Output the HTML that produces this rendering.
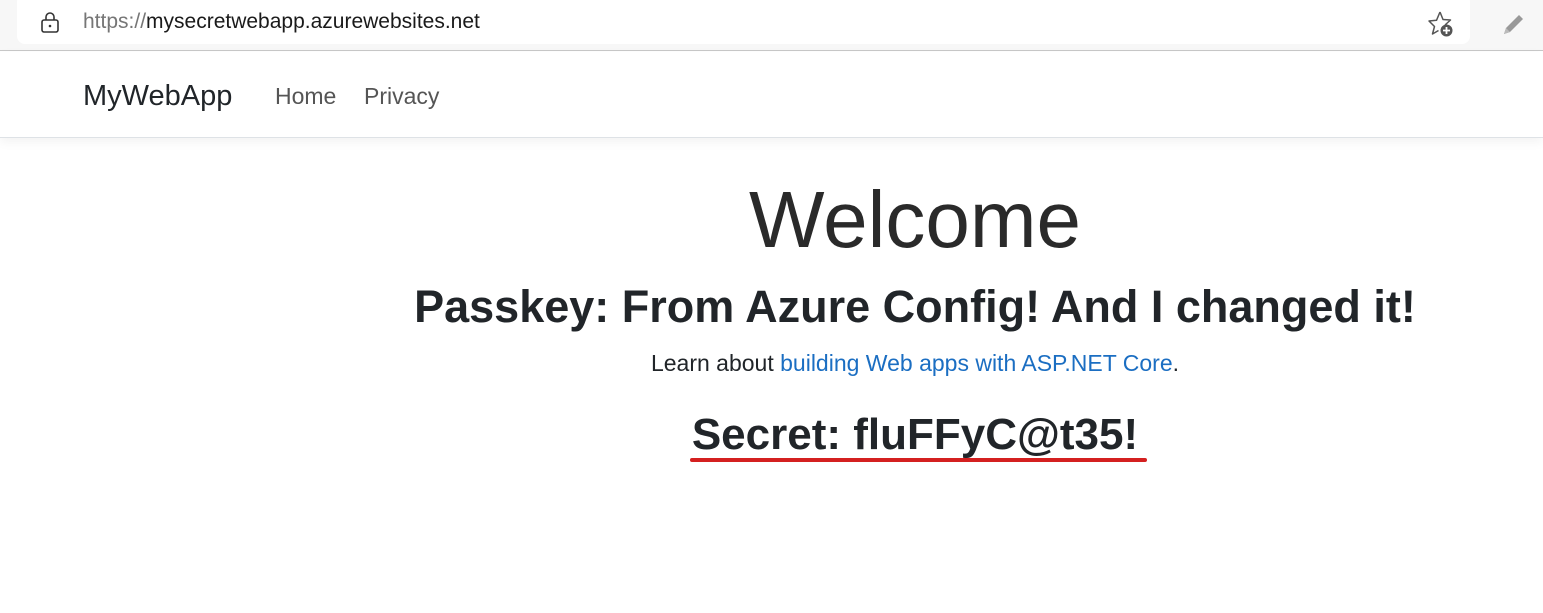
<!DOCTYPE html>
<html><head><meta charset="utf-8"><style>
*{margin:0;padding:0;box-sizing:border-box}
body{width:1543px;height:613px;background:#fff;font-family:"Liberation Sans",sans-serif;position:relative;overflow:hidden;color:#212529}
.top{position:absolute;left:0;top:0;width:1543px;height:51px;background:#f7f7f7;border-bottom:1px solid #c8c8c8}
.addr{position:absolute;left:17px;top:-6px;width:1453px;height:50px;background:#fff;border-radius:8px}
.url{position:absolute;left:83px;top:10px;font-size:21px;color:#1a1a1a}
.url span{color:#767676}
.nav{position:absolute;left:0;top:52px;width:1543px;height:86px;border-bottom:1px solid #dee2e6;box-shadow:0 4px 10px rgba(0,0,0,.05)}
.brand{position:absolute;left:83px;top:28px;font-size:29px;color:#212529}
.link{position:absolute;top:31px;font-size:23px;color:#555}
.c{position:absolute;left:0;width:1830px;text-align:center;white-space:nowrap}
</style></head><body>
<div class="top"><div class="addr"></div>
<svg style="position:absolute;left:39px;top:11px" width="22" height="24" viewBox="0 0 22 24"><rect x="3" y="9" width="16" height="12" rx="2" fill="none" stroke="#333" stroke-width="1.6"/><path d="M7 9V6a4 4 0 0 1 8 0v3" fill="none" stroke="#333" stroke-width="1.6"/><circle cx="11" cy="15" r="1.3" fill="#333"/></svg>
<div class="url"><span>https://</span>mysecretwebapp.azurewebsites.net</div>
<svg style="position:absolute;left:1427px;top:10px" width="28" height="28" viewBox="0 0 28 28"><path d="M13 2L16 9.5 23.5 10 18 15M11.5 20.5L5.5 24 7.5 16.5 2 11 9.5 10.3 13 2" fill="none" stroke="#555" stroke-width="1.5" stroke-linejoin="round"/><circle cx="19.5" cy="20.5" r="6" fill="#555"/><path d="M19.5 17v7M16 20.5h7" stroke="#fff" stroke-width="1.8"/></svg>
<svg style="position:absolute;left:1500px;top:10px" width="28" height="28" viewBox="0 0 28 28"><path d="M4 24l2-6L19 5l4 4L10 22z" fill="#999"/><path d="M4 24l2-6 4 4z" fill="#bbb"/></svg>
</div>
<div class="nav"><div class="brand">MyWebApp</div><div class="link" style="left:275px">Home</div><div class="link" style="left:364px">Privacy</div></div>
<div class="c" style="top:174px;font-size:80px;font-weight:300;color:#2a2a2a">Welcome</div>
<div class="c" style="top:281px;font-size:45px;font-weight:bold">Passkey: From Azure Config! And I changed it!</div>
<div class="c" style="top:350px;font-size:23px">Learn about <span style="color:#1b6ec2">building Web apps with ASP.NET Core</span>.</div>
<div class="c" style="top:410px;font-size:44px;font-weight:bold">Secret: fluFFyC@t35!</div>
<div style="position:absolute;left:690px;top:458px;width:457px;height:4px;background:#d42020;border-radius:2px"></div>
</body></html>
